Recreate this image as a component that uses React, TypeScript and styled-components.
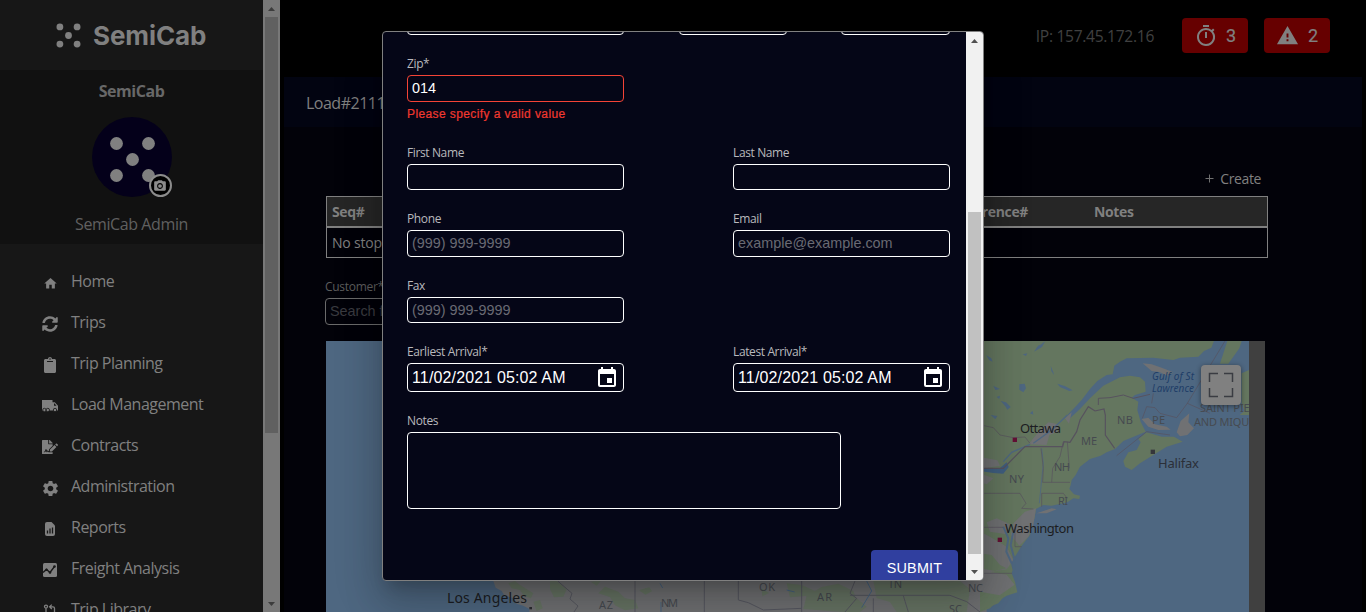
import React from "react";
import styled, { createGlobalStyle, css } from "styled-components";
import { MdHome, MdSettings, MdEvent, MdWarning, MdOutlineTimer, MdCameraAlt } from "react-icons/md";
import { FaSyncAlt, FaClipboard, FaFileSignature } from "react-icons/fa";

const GlobalStyle = createGlobalStyle`
  * { box-sizing: border-box; }
  html, body { margin: 0; height: 100%; overflow: hidden; background: #000; }
  body { font-family: "Open Sans", "Noto Sans", sans-serif; }
  svg { display: block; flex: none; }
`;

const Page = styled.div`
  position: relative;
  display: flex;
  width: 1366px;
  height: 612px;
  overflow: hidden;
  background: #000;
`;

/* ---------- Sidebar ---------- */
const Sidebar = styled.aside`
  width: 263px;
  height: 612px;
  overflow: hidden;
  background: #171717;
  color: #808080;
`;
const Brand = styled.div`
  height: 70px;
  display: flex;
  align-items: center;
  gap: 12px;
  padding-left: 56px;
  font: 700 26px/36px Inter, sans-serif;
  letter-spacing: -0.1px;
`;
const BrandName = styled.span`
  margin-top: 1px;
`;
const Profile = styled.div`
  height: 174px;
  background: #111;
  display: flex;
  flex-direction: column;
  align-items: center;
  padding-top: 9px;
`;
const Company = styled.div`
  font-size: 16px;
  font-weight: 700;
  line-height: 24px;
  color: #686868;
  letter-spacing: -0.45px;
`;
const Avatar = styled.div`
  position: relative;
  width: 80px;
  height: 80px;
  margin: 14px 0 15px;
  padding: 3px 0 0 1px;
  border-radius: 50%;
  background: #04001a;
`;
const CameraBadge = styled.span`
  position: absolute;
  left: 57px;
  top: 57px;
  width: 23px;
  height: 23px;
  display: flex;
  align-items: center;
  justify-content: center;
  border: 2px solid #8c8c8c;
  border-radius: 50%;
  background: #000;
  color: #8c8c8c;
`;
const UserName = styled.div`
  font-size: 16px;
  line-height: 24px;
  letter-spacing: -0.4px;
  color: #606060;
`;
const Nav = styled.nav`
  display: flex;
  flex-direction: column;
  padding-top: 17px;
`;
const NavItem = styled.a`
  display: flex;
  align-items: center;
  height: 41px;
  flex: none;
  padding: 0 0 1px 41px;
  font-size: 16px;
  line-height: 24px;
  letter-spacing: -0.5px;
`;
const NavIcon = styled.span`
  width: 18px;
  height: 18px;
  margin: 3px 12px 0 0;
  padding-top: 1px;
  display: flex;
  align-items: center;
  justify-content: center;
`;

/* ---------- Scrollbars ---------- */
const Track = styled.div<{ $tone: "dim" | "light" }>`
  width: 17px;
  flex: none;
  display: flex;
  flex-direction: column;
  align-items: center;
  ${(p) => (p.$tone === "dim" ? css`background: #787878; color: #3c3c3c;` : css`background: #f1f1f1; color: #505050;`)}
`;
const ArrowBox = styled.span`
  height: 17px;
  display: flex;
  align-items: center;
`;
const Thumb = styled.div<{ $size: number; $offset: number; $color: string }>`
  width: 13px;
  height: ${(p) => p.$size}px;
  margin-top: ${(p) => p.$offset}px;
  margin-bottom: auto;
  background: ${(p) => p.$color};
`;
const Arrow = ({ down }: { down?: boolean }) => (
  <ArrowBox>
    <svg width="7" height="4" viewBox="0 0 7 4" fill="currentColor">
      <path d={down ? "M0 0h7L3.500 4z" : "M0 4h7L3.500 0z"} />
    </svg>
  </ArrowBox>
);

/* ---------- Main ---------- */
const Main = styled.main`
  width: 1086px;
  height: 612px;
  padding: 0 4px;
  display: flex;
  flex-direction: column;
  color: #808080;
`;
const TopBar = styled.header`
  height: 77px;
  flex: none;
  display: flex;
  align-items: flex-start;
  justify-content: flex-end;
  padding: 18px 32px 0 0;
  gap: 16px;
`;
const IpText = styled.span`
  margin-right: 12px;
  font-size: 15.6px;
  line-height: 37px;
  letter-spacing: -0.3px;
  color: #404040;
`;
const AlertButton = styled.button`
  width: 66px;
  height: 35px;
  display: flex;
  align-items: center;
  justify-content: space-between;
  padding: 0 12px;
  border: 0;
  border-radius: 4px;
  background: #660000;
  color: #808080;
  font: 400 18px/33px Roboto, sans-serif;
  -webkit-text-stroke: 0.2px #808080;

  span {
    margin-top: -1px;
  }
`;
const TitleBar = styled.div`
  height: 50px;
  flex: none;
  padding-left: 22px;
  background: #020411;
  font-size: 16px;
  line-height: 52px;
  letter-spacing: -0.5px;
`;
const Content = styled.section`
  flex: 1;
  padding: 40px 0 0 41px;
  background: #020209;
`;
const CreateRow = styled.div`
  width: 943px;
  height: 29px;
  display: flex;
  justify-content: flex-end;
  align-items: center;
  gap: 6px;
  padding: 0 7px 6px 0;
  font-size: 14px;
  letter-spacing: -0.4px;
`;
const Table = styled.div`
  width: 942px;
  margin-left: 1px;
  border: 1px solid #808080;
  font-size: 14px;
`;
const TableHead = styled.div`
  display: grid;
  grid-template-columns: 620px 142px 1fr;
  height: 31px;
  padding-left: 5px;
  background: #262626;
  border-bottom: 2px solid #808080;
  font-weight: 700;
  line-height: 30px;
  letter-spacing: -0.35px;
`;
const TableRow = styled.div`
  height: 29px;
  padding-left: 5px;
  line-height: 29px;
  letter-spacing: -0.2px;
`;
const CustomerLabel = styled.div`
  margin-top: 20px;
  height: 20px;
  font-size: 12px;
  line-height: 18px;
  letter-spacing: -0.3px;
  color: #5d5d5d;
`;
const CustomerInput = styled.div`
  width: 217px;
  height: 27px;
  margin-bottom: 16px;
  padding-left: 4px;
  border: 1px solid #6a6a6a;
  border-radius: 4px;
  font: 14.400px/25px "Liberation Sans", sans-serif;
  color: #3a3b40;
`;
const MapFrame = styled.div`
  position: relative;
  width: 939px;
  height: 271px;
  margin-left: 1px;
  background: #404040;
`;
const FullscreenButton = styled.button`
  position: absolute;
  left: 875px;
  top: 24px;
  width: 40px;
  height: 40px;
  padding: 0;
  display: flex;
  align-items: center;
  justify-content: center;
  border: 0;
  border-radius: 4px;
  background: #808080;
  color: #3a3c42;
  box-shadow: 0 1px 5px rgba(0, 0, 0, 0.45);
`;

/* ---------- Dialog ---------- */
const Dialog = styled.div`
  position: absolute;
  left: 382px;
  top: 31px;
  width: 602px;
  height: 550px;
  display: flex;
  overflow: hidden;
  border: 1px solid #808080;
  border-radius: 4px;
  background: #050617;
  box-shadow: 0 11px 15px -7px rgba(0, 0, 0, 0.2), 0 24px 38px 3px rgba(0, 0, 0, 0.14),
    0 9px 46px 8px rgba(0, 0, 0, 0.12);
`;
const Form = styled.form`
  width: 583px;
  height: 548px;
  padding-left: 24px;
  overflow: hidden;
`;
const FormRow = styled.div<{ $h: number }>`
  display: flex;
  gap: 109px;
  height: ${(p) => p.$h}px;
`;
const CutRow = styled.div`
  display: flex;
  align-items: flex-end;
  height: 3px;
  margin-bottom: 20px;
`;
const CutInput = styled.div<{ $w: number; $gap: number }>`
  width: ${(p) => p.$w}px;
  height: 27px;
  flex: none;
  margin-right: ${(p) => p.$gap}px;
  border: 1px solid #fff;
  border-radius: 4px;
`;
const Field = styled.div`
  width: 217px;
`;
const Label = styled.label`
  display: block;
  height: 20px;
  font-size: 12px;
  line-height: 17px;
  letter-spacing: -0.38px;
  color: #b9b9bd;
`;
const Input = styled.div<{ $h?: number; $tone?: "error" | "hint" }>`
  height: ${(p) => p.$h ?? 27}px;
  padding: 0 4px;
  border: 1px solid ${(p) => (p.$tone === "error" ? "#f44336" : "#fff")};
  border-radius: 4px;
  color: ${(p) => (p.$tone === "hint" ? "#696a73" : "#fff")};
  font: 14.400px/25px "Liberation Sans", sans-serif;
`;
const DateInput = styled(Input)`
  display: flex;
  align-items: center;
  justify-content: space-between;
  padding: 0 4px;
  font-size: 16px;
  letter-spacing: 0.14px;
`;
const ErrorText = styled.div`
  margin-top: 3px;
  font: 12px/18px "Liberation Sans", sans-serif;
  letter-spacing: 0.4px;
  -webkit-text-stroke: 0.2px #f44336;
  color: #f0342c;
`;
const NotesArea = styled.div`
  width: 434px;
  height: 77px;
  border: 1px solid #fff;
  border-radius: 4px;
`;
const Actions = styled.div`
  display: flex;
  justify-content: flex-end;
  padding: 41px 8px 0 0;
`;
const Submit = styled.button`
  width: 87px;
  height: 36px;
  flex: none;
  padding: 0;
  border: 0;
  border-radius: 4px;
  background: #303f9f;
  color: #fff;
  font: 14.400px/36px "Liberation Sans", sans-serif;
  letter-spacing: 0.2px;
`;

const Dice = ({ size, r, gap }: { size: number; r: number; gap: number }) => (
  <svg width={size} height={size} viewBox={`${-size / 2} ${-size / 2} ${size} ${size}`} fill="#808080">
    <circle r={r} />
    <circle cx={-gap} cy={-gap} r={r} />
    <circle cx={gap} cy={-gap} r={r} />
    <circle cx={-gap} cy={gap} r={r} />
    <circle cx={gap} cy={gap} r={r} />
  </svg>
);

const TruckIcon = () => (
  <svg width="16" height="12" viewBox="0 0 16 12">
    <path d="M0 0h10.500v2.200h2.300L16 5.800v4.700H0z" fill="#808080" />
    <path d="M12 3.400h.6l1.900 2.300H12z" fill="#171717" />
    <g fill="#808080" stroke="#171717" strokeWidth=".8">
      <circle cx="2.400" cy="10" r="1.700" />
      <circle cx="5.800" cy="10" r="1.700" />
      <circle cx="13" cy="10" r="1.700" />
    </g>
  </svg>
);
const ReportIcon = () => (
  <svg width="10" height="14" viewBox="0 0 10 14">
    <path d="M2 0h4.500L10 3.500V12a2 2 0 0 1-2 2H2a2 2 0 0 1-2-2V2a2 2 0 0 1 2-2z" fill="#808080" />
    <path d="M2.500 11.500v-3M5 11.500v-5M7.500 11.500v-6" stroke="#171717" strokeWidth="1.300" />
  </svg>
);
const AnalysisIcon = () => (
  <svg width="14" height="14" viewBox="0 0 14 14">
    <rect width="14" height="14" rx="1.500" fill="#808080" />
    <path d="M0 9.500 3.500 6.500 7 9.500 11.500 3.500" fill="none" stroke="#171717" strokeWidth="1.400" />
    <circle cx="3.500" cy="6.800" r="1.200" fill="#171717" />
    <circle cx="7" cy="9.500" r="1.300" fill="#171717" />
    <circle cx="11.500" cy="3.500" r="1.300" fill="#171717" />
  </svg>
);
const LibraryIcon = () => (
  <svg width="14" height="14" viewBox="0 0 14 14" fill="none" stroke="#808080" strokeWidth="1.300">
    <circle cx="3" cy="2.600" r="1.500" />
    <path d="M3 4.200V14M7 2.800h3a1.500 1.500 0 0 1 1.500 1.500V14M8.800.6 6.600 2.800l2.200 2.200" />
  </svg>
);

const MENU = [
  { text: "Home", icon: <MdHome size={15} /> },
  { text: "Trips", icon: <FaSyncAlt size={16} /> },
  { text: "Trip Planning", icon: <FaClipboard size={16} /> },
  { text: "Load Management", icon: <TruckIcon /> },
  { text: "Contracts", icon: <FaFileSignature size={16} /> },
  { text: "Administration", icon: <MdSettings size={19} /> },
  { text: "Reports", icon: <ReportIcon /> },
  { text: "Freight Analysis", icon: <AnalysisIcon /> },
  { text: "Trip Library", icon: <LibraryIcon /> },
];

const WATER = "#4e6781";
const GREEN = "#64765f";
const GREY = "#707173";

const RegionMap = () => (
  <svg width="923" height="271" viewBox="326 341 923 271" fontFamily='"Noto Sans", sans-serif'>
    <rect x="326" y="341" width="923" height="271" fill={WATER} />
    {/* Southern states */}
    <g transform="translate(320 335) scale(.33333)">
      <path d="M500 700 520 738 527 758 545 768 552 780 580 790 590 806 610 812 628 822 628 831H2000V700z" fill={GREY} />
      <g fill={GREEN} opacity=".75">
        <path d="M565 745 585 738 600 750 640 775 632 790 612 782 600 765 575 760zM690 738h20l30 25-10 22-28 2-12-25zM640 800l20-5 8 25-18 8zM835 775l20-20 40 15 20 20 30 5 10 25-40 6-30-15-15-25zM958 765l30-8 8 12-20 10zM812 740l30-2-12 14z" />
        <path d="M960 768l20-8-4 16zM1400 745l45 5 40 18 20-12 50-10 45 22 20 60-60 2-110-8 10-40-50 5z" />
        <path d="M1660 738h260l30 25-10 68h-210l-20-30-40-12zM1325 760l22 14-20 10zM1560 800l50-10 30 25-20 16h-50z" />
      </g>
      <g stroke="#565760" strokeWidth="3" fill="none">
        <path d="M713 738 756 775 750 792 774 813 762 831M945 738V831M1153 738V831M1255 738V795L1285 803 1330 825 1445 820M1445 738V831M1605 738 1590 775 1610 790 1575 831M1590 781H1890L1940 800 1980 831M1660 790V831M1750 782 1765 831" />
      </g>
      <path d="M1023 831v-30M1020 745l8 14M1400 765l24 6M1640 738l15 30-30 50" stroke="#46627f" strokeWidth="3" fill="none" />
      <rect x="628" y="816" width="8" height="7" fill="#2b2b30" />
    </g>
    {/* North-east coast */}
    <g transform="translate(980 335) scale(.33333)">
      <path
        d="M0 18H702L694 38 672 48 655 65 600 68 580 75 520 68 440 70 420 80 403 92 398 118 380 120 352 138 330 162 305 195 282 220 262 240 270 250 300 222 330 190 370 152 420 127 450 122 480 127 495 140 497 170 465 180 455 188 475 200 472 225 482 260 497 290 430 318 405 342 380 352 362 362 330 372 300 395 287 420 275 435 272 450 268 462 282 478 300 482 298 492 280 490 262 502 215 512 190 510 168 522 164 548 155 575 150 600 125 632 108 660 92 682 98 705 95 715 105 740 112 772 80 782 50 800 30 820 0 831z"
        fill={GREEN}
      />
      <g fill={GREY}>
        <path d="M488 85 515 88 545 98 580 112 562 122 540 112 515 108zM485 252 505 248 525 268 560 275 572 284 535 285 505 275zM590 292 602 258 628 235 625 262 642 280 622 300 600 304z" />
        <path d="M146 328 180 285 205 262 235 268 232 290 208 300 200 330zM100 565 135 530 168 520 160 570 145 605 118 632 92 600zM20 562l30-12 40 18-10 30-50-8zM0 590l30 15 50 30 20 40-20 28-50 8 50 8 24 30-45 32L0 770zM170 535l45-15 15 3-30 12zM255 250l20-18-8 34zM12 368l40 8 8 16-48 8zM0 415l40 15-20 18-20-6z" />
      </g>
      <path d="M0 655 35 660 60 690 80 700 45 708 0 700zM0 785l45 4 30-8-20 24-55 22z" fill={GREEN} />
      <path d="M430 378 445 352 470 345 482 322 475 312 500 292 545 305 582 305 608 320 560 335 520 360 480 385 455 405 435 395z" fill={GREEN} />
      <path d="M742 18H785L778 40 745 86 720 86zM785 115l22-10V240l-28 0 14-12-8-25z" fill={GREEN} />
      <path d="M262 240 215 285 160 325" fill="none" stroke={WATER} strokeWidth="4" />
      <path d="M150 328 95 352 70 380" fill="none" stroke={WATER} strokeWidth="4" />
      <path d="M185 340l5 45-6 60-6 60" fill="none" stroke={WATER} strokeWidth="2.500" />
      <path d="M70 575l15 35-6 40 16 35M100 590l-8 40 12 45" fill="none" stroke={WATER} strokeWidth="6" />
      <path d="M162 50l12-18 10-4 12-10-10 18-14 8zM62 198l16 4 14 14-10 8-6-10zM118 148l16-2 4 14-8 12-12-8zM18 60l16 10 4 10-10-4zM128 58l14-3-4 8zM212 92l8 20 2 8-8-12zM232 146l24 8 22 12-10 2-28-12zM40 152l20 10-14 3zM32 240l20 3-6 10zM50 186l10-4-2 10zM150 235l8-8 2 12z" fill={WATER} />
      <path d="M80 382 86 396 70 416 40 414 0 408 0 400 60 399z" fill="#405f80" />
      <g stroke="#57525e" strokeWidth="2" fill="none">
        <path d="M12 272 40 278 60 300 100 308 135 306 150 325M12 475H120L138 505 125 520 160 522M12 577H70M105 575v60h20M12 715H96M183 340 190 400 188 442H270M185 475H250L262 490M215 442 218 400 240 365 250 320M262 320 268 400M185 475V515M487 250 500 215 525 218 540 235 590 248 622 205 690 235M520 175 515 205M622 205 735 18M410 362 500 290 570 300" />
        <path d="M12 400H70L135 335H248L252 320 270 322 290 290 300 255 325 215 345 228 372 222 376 240V300L404 340" strokeWidth="3.500" />
        <path d="M355 210V190L390 188 430 180 460 190 510 178" strokeWidth="3" />
      </g>
      <rect x="98" y="308" width="13" height="13" fill="#641035" />
      <rect x="53" y="608" width="13" height="13" fill="#641035" />
      <rect x="512" y="344" width="13" height="13" fill="#35363b" />
    </g>
    {/* Place names */}
    <g fill="#1c1d22" fontSize="13">
      <text x="1020" y="433" textLength="41">Ottawa</text>
      <text x="1158" y="468" textLength="41" fill="#2b2f38">Halifax</text>
      <text x="1005" y="533" textLength="69">Washington</text>
      <text x="447" y="603" textLength="80" fontSize="14">Los Angeles</text>
    </g>
    <g fill="#464a50" fontSize="11">
      <text x="1117" y="424" textLength="16">NB</text>
      <text x="1152" y="424" textLength="13">PE</text>
      <text x="1081" y="445" textLength="16">ME</text>
      <text x="1054" y="471" textLength="16">NH</text>
      <text x="1009" y="483" textLength="15">NY</text>
      <text x="1058" y="505" textLength="10">RI</text>
      <text x="599" y="609" textLength="14">AZ</text>
      <text x="661" y="607" textLength="17">NM</text>
      <text x="759" y="591" textLength="16">OK</text>
      <text x="817" y="601" textLength="15">AR</text>
      <text x="888" y="588" textLength="14">TN</text>
      <text x="968" y="592" textLength="15">NC</text>
      <text x="949" y="613" textLength="13">SC</text>
      <text x="1200" y="412" textLength="69">SAINT PIERRE</text>
      <text x="1194" y="426" textLength="83">AND MIQUELON</text>
    </g>
    <g fill="#1f3e68" fontSize="10" fontStyle="italic">
      <text x="1152" y="380" textLength="42">Gulf of St</text>
      <text x="1152" y="392" textLength="42">Lawrence</text>
    </g>
  </svg>
);

export default function App() {
  return (
    <Page>
      <GlobalStyle />
      <Sidebar>
        <Brand>
          <Dice size={25} r={3.4} gap={8.6} />
          <BrandName>SemiCab</BrandName>
        </Brand>
        <Profile>
          <Company>SemiCab</Company>
          <Avatar>
            <Dice size={79} r={6.4} gap={16} />
            <CameraBadge>
              <MdCameraAlt size={14} />
            </CameraBadge>
          </Avatar>
          <UserName>SemiCab Admin</UserName>
        </Profile>
        <Nav>
          {MENU.map((item) => (
            <NavItem key={item.text}>
              <NavIcon>{item.icon}</NavIcon>
              <span>{item.text}</span>
            </NavItem>
          ))}
        </Nav>
      </Sidebar>
      <Track $tone="dim">
        <Arrow />
        <Thumb $size={416} $offset={0} $color="#606060" />
        <Arrow down />
      </Track>

      <Main>
        <TopBar>
          <IpText>IP: 157.45.172.16</IpText>
          <AlertButton>
            <MdOutlineTimer size={24} />
            <span>3</span>
          </AlertButton>
          <AlertButton>
            <MdWarning size={23} />
            <span>2</span>
          </AlertButton>
        </TopBar>
        <TitleBar>Load#2111</TitleBar>
        <Content>
          <CreateRow>
            <svg width="9" height="9" viewBox="0 0 9 9" stroke="#707070">
              <path d="M4.500 .5v8M.5 4.500h8" />
            </svg>
            <span>Create</span>
          </CreateRow>
          <Table>
            <TableHead>
              <span>Seq#</span>
              <span>Reference#</span>
              <span>Notes</span>
            </TableHead>
            <TableRow>No stops</TableRow>
          </Table>
          <CustomerLabel>Customer*</CustomerLabel>
          <CustomerInput>Search for</CustomerInput>
          <MapFrame>
            <RegionMap />
            <FullscreenButton>
              <svg width="26" height="26" viewBox="0 0 26 26" fill="none" stroke="currentColor" strokeWidth="1.500">
                <path d="M1.500 10V1.500H10M16 1.500h8.500V10M24.500 16v8.500H16M10 24.500H1.500V16" />
              </svg>
            </FullscreenButton>
          </MapFrame>
        </Content>
      </Main>

      <Dialog>
        <Form>
          <CutRow>
            <CutInput $w={217} $gap={55} />
            <CutInput $w={108} $gap={54} />
            <CutInput $w={109} $gap={0} />
          </CutRow>
          <FormRow $h={89}>
            <Field>
              <Label>Zip*</Label>
              <Input $tone="error">014</Input>
              <ErrorText>Please specify a valid value</ErrorText>
            </Field>
          </FormRow>
          <FormRow $h={66}>
            <Field>
              <Label>First Name</Label>
              <Input $h={26} />
            </Field>
            <Field>
              <Label>Last Name</Label>
              <Input $h={26} />
            </Field>
          </FormRow>
          <FormRow $h={67}>
            <Field>
              <Label>Phone</Label>
              <Input $tone="hint">(999) 999-9999</Input>
            </Field>
            <Field>
              <Label>Email</Label>
              <Input $tone="hint">example@example.com</Input>
            </Field>
          </FormRow>
          <FormRow $h={66}>
            <Field>
              <Label>Fax</Label>
              <Input $h={26} $tone="hint">(999) 999-9999</Input>
            </Field>
          </FormRow>
          <FormRow $h={69}>
            <Field>
              <Label>Earliest Arrival*</Label>
              <DateInput $h={29}>
                <span>11/02/2021 05:02 AM</span>
                <MdEvent size={24} />
              </DateInput>
            </Field>
            <Field>
              <Label>Latest Arrival*</Label>
              <DateInput $h={29}>
                <span>11/02/2021 05:02 AM</span>
                <MdEvent size={24} />
              </DateInput>
            </Field>
          </FormRow>
          <Label>Notes</Label>
          <NotesArea />
          <Actions>
            <Submit type="button">SUBMIT</Submit>
          </Actions>
        </Form>
        <Track $tone="light">
          <Arrow />
          <Thumb $size={342} $offset={163} $color="#c1c1c1" />
          <Arrow down />
        </Track>
      </Dialog>
    </Page>
  );
}
